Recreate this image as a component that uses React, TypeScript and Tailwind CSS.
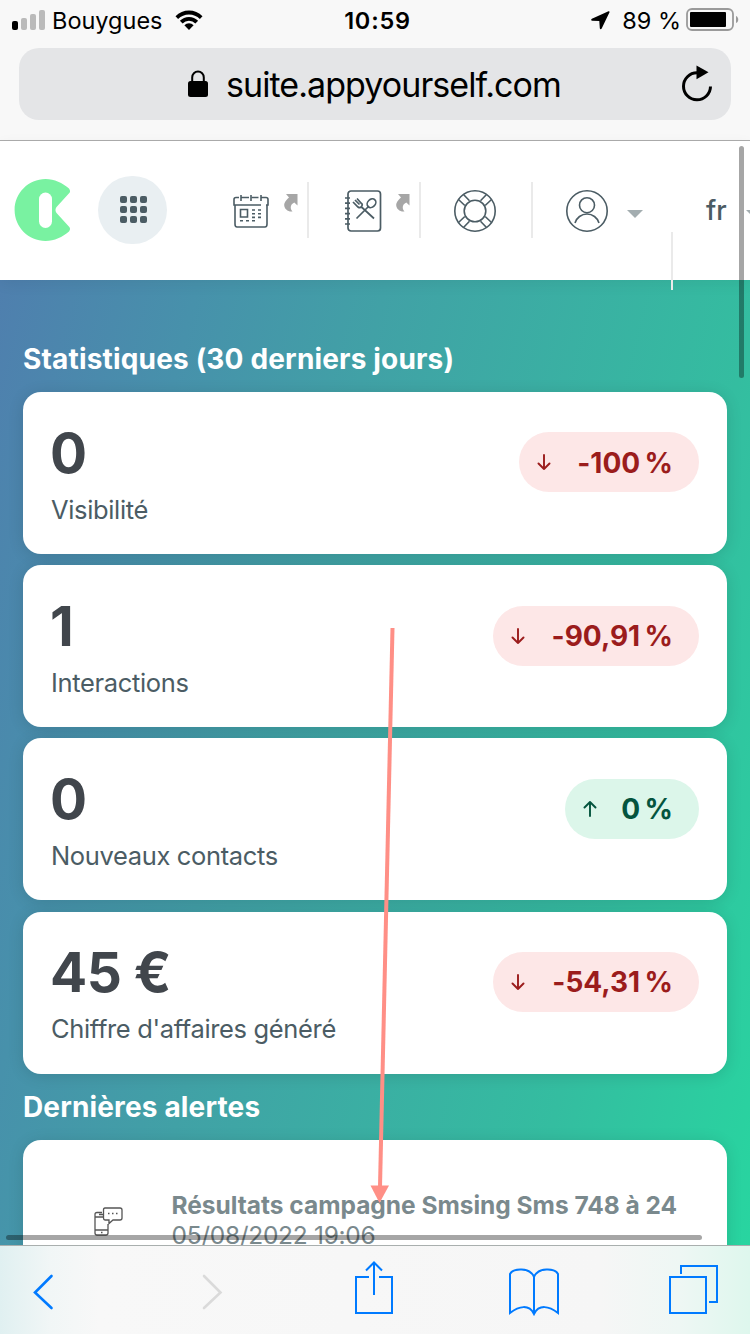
import clsx from 'clsx';

interface Stat {
  value: string;
  label: string;
  change: string;
  trend: 'up' | 'down';
  pillWidth: string;
}

const stats: Stat[] = [
  { value: '0', label: 'Visibilité', change: '-100\u202f%', trend: 'down', pillWidth: 'w-[180px]' },
  { value: '1', label: 'Interactions', change: '-90,91\u202f%', trend: 'down', pillWidth: 'w-[206px]' },
  { value: '0', label: 'Nouveaux contacts', change: '0\u202f%', trend: 'up', pillWidth: 'w-[134px]' },
  { value: '45 €', label: "Chiffre d'affaires généré", change: '-54,31\u202f%', trend: 'down', pillWidth: 'w-[206px]' },
];

function StatusBar() {
  return (
    <div className="h-10 flex items-center pl-3 pr-[10px] text-black">
      <div className="flex-1 flex items-center">
        <svg width="34" height="20" viewBox="0 0 34 20" className="shrink-0">
          <rect x="0" y="11" width="6" height="9" rx="2" />
          <rect x="9" y="8" width="6" height="12" rx="2" fill="#bababa" />
          <rect x="18" y="4" width="6" height="16" rx="2" fill="#bababa" />
          <rect x="27" y="0" width="6" height="20" rx="2" fill="#bababa" />
        </svg>
        <span className="ml-[6px] pt-[2px] text-[23.5px] leading-none">Bouygues</span>
        <svg width="28" height="21" viewBox="0 0 28 21" className="ml-3">
          <path d="M0.5 6.2a19 19 0 0 1 27 0l-2.6 2.7a15.4 15.4 0 0 0-21.8 0z" />
          <path d="M4.9 10.7a12.8 12.8 0 0 1 18.2 0l-2.7 2.7a9 9 0 0 0-12.8 0z" />
          <path d="M9.4 15.2a6.5 6.5 0 0 1 9.2 0L14 20z" />
        </svg>
      </div>
      <span className="pl-[3px] pt-[2px] text-[23.5px] font-semibold leading-none tracking-[0.8px]">10:59</span>
      <div className="flex-1 flex items-center justify-end">
        <svg width="19" height="19" viewBox="0 0 19 19">
          <path d="M17.5 0.3L0.9 7.7c-1.2.6-.8 1.9.3 2L8.3 10l.5 7.2c.1 1.2 1.3 1.5 1.900.3L18.5 1.300c.3-.8-.3-1.300-1-1z" />
        </svg>
        <span className="ml-3 pt-[2px] text-[23.5px] leading-none">89 %</span>
        <svg width="54" height="24" viewBox="0 0 54 24" className="ml-[5px]">
          <rect x="1" y="1" width="46" height="21" rx="5" fill="none" stroke="#9a9a9a" strokeWidth="1.8" />
          <rect x="4" y="4" width="36" height="15" rx="1" />
          <path d="M50 8c3 1 3 6 0 7z" fill="#9a9a9a" />
        </svg>
      </div>
    </div>
  );
}

function AddressBar() {
  return (
    <div className="mt-2 mx-[19px] h-[72px] rounded-[20px] bg-[#e4e5e7] flex items-center pl-[169px] pr-[18px]">
      <svg width="20" height="28" viewBox="0 0 20 28">
        <path d="M4.2 12V7.5a5.8 6 0 0 1 11.6 0V12" fill="none" stroke="#000" strokeWidth="2" />
        <rect x="0" y="11" width="20" height="16" rx="2.5" />
      </svg>
      <span className="ml-[18px] pt-px text-[34px] leading-none tracking-[-0.94px] text-black whitespace-nowrap">
        suite.appyourself.com
      </span>
      <svg width="32" height="38" viewBox="0 0 32 38" className="ml-auto">
        <path d="M16 7.8A13.5 13.5 0 1 0 29.5 21.5" fill="none" stroke="#000" strokeWidth="3" />
        <path d="M15.5 0.5L27.5 7.2L15.5 14.2z" />
      </svg>
    </div>
  );
}

function ShortcutArrow() {
  return (
    <svg width="14" height="18" viewBox="0 0 14 18" fill="#a6a6a6">
      <path d="M2 0H13.5V11.5L10.3 8.6C6.500 10.500 5.500 14 8.500 17.500C3.500 18.200-0.800 14 0.400 9.500C1.200 7 3.200 5 5 3.500z" />
    </svg>
  );
}

function Caret() {
  return (
    <svg width="16" height="8" viewBox="0 0 16 8" fill="#a3adb0" className="shrink-0">
      <path d="M0 0h16L8 8z" />
    </svg>
  );
}

function NavBar() {
  return (
    <nav className="relative z-10 h-[139px] pb-px bg-white shadow-[0_4px_14px_rgba(0,0,0,0.06)] flex items-center pl-[14px] overflow-x-clip">
      <svg width="56" height="62" viewBox="0 0 56 62" className="shrink-0">
        <path
          d="M31.5 0C14.5 0 0.6 14 0.6 31s13.9 31 30.9 31c9 0 17-4 23.5-9.5 1.300-1.400 1.300-3.300.3-4.400L43 34.500c-2-2-2-5 0-7L55.300 14.100c1-1.100 1-3-.3-4.600C48.500 4 40.500 0 31.500 0z"
          fill="#79f2a1"
        />
        <rect x="25" y="13.5" width="13" height="35.5" rx="6.5" fill="#fff" />
      </svg>

      <div className="ml-7 w-[69px] h-[68px] pb-[2px] pl-px shrink-0 rounded-full bg-[#e9eff2] flex items-center justify-center">
        <div className="grid grid-cols-3 gap-[3px]">
          {Array.from({ length: 9 }, (_, index) => (
            <span key={index} className="size-[7px] rounded-[2px] bg-[#4b5c64]" />
          ))}
        </div>
      </div>

      <div className="ml-[30px] w-28 h-14 shrink-0 border-r-2 border-[#eaeaea] flex pl-9">
        <svg width="36" height="34" viewBox="0 0 36 34" fill="none" stroke="#4b5c64" strokeWidth="1.6" className="mt-[13px]">
          <path d="M6 2.5H3Q1 2.5 1 4.5V10h2M8 2.5h8M18.5 2.5h7M28 2.5h5Q35 2.5 35 4.5V10h-2" />
          <path d="M8 0v6M18 0v6M28 0v6M3 10h25M2 10v19q0 3 2 3h28q2 0 2-3V10" />
          <path d="M7.5 14.5h7v7.5h-7zM19 15h3M25 15h3M19 18.7h3M25 18.7h3M19 22.4h3M25 22.4h3M7 25.7h3M13 25.7h3M19 25.7h3" />
        </svg>
        <div className="ml-[15px] mt-3">
          <ShortcutArrow />
        </div>
      </div>

      <div className="w-28 h-14 shrink-0 border-r-2 border-[#eaeaea] flex pl-9">
        <svg width="37" height="42" viewBox="0 0 37 42" fill="none" stroke="#4b5c64" strokeWidth="1.7" className="mt-2">
          <rect x="3" y="1" width="32.5" height="40" rx="3" />
          <path d="M0 8h5M0 13.2h5M0 18.4h5M0 23.6h5M0 28.8h5M0 34h5" />
          <path d="M11.5 28.5L24 16M29 28.5L16.500 17M8 12l5 5q2 1.500 3.500-.5t0-3l-4.500-5M10 10l4.500 4.500" />
          <ellipse cx="26.5" cy="13.2" rx="4.8" ry="3.8" transform="rotate(-45 26.5 13.2)" />
        </svg>
        <div className="ml-[14px] mt-3">
          <ShortcutArrow />
        </div>
      </div>

      <div className="w-28 h-14 shrink-0 border-r-2 border-[#eaeaea] flex pl-[33px]">
        <svg width="42" height="42" viewBox="0 0 42 42" fill="none" stroke="#4b5c64" strokeWidth="1.6" className="mt-2">
          <circle cx="21" cy="21" r="20.2" />
          <circle cx="21" cy="21" r="10.8" />
          <path d="M9.5 4.5l6 6.3M4.5 9.5l6.3 6M32.5 4.5l-6 6.3M37.5 9.5l-6.3 6M9.5 37.5l6-6.3M4.5 32.5l6.3-6M32.5 37.5l-6-6.3M37.5 32.5l-6.3-6" />
        </svg>
      </div>

      <div className="w-[138px] h-14 shrink-0 flex pl-[33px]">
        <svg width="42" height="42" viewBox="0 0 42 42" fill="none" stroke="#4b5c64" strokeWidth="1.6" className="mt-2">
          <circle cx="21" cy="21" r="20.2" />
          <circle cx="21" cy="15.2" r="7.5" />
          <path d="M9 33a12.5 12.5 0 0 1 24 0" />
        </svg>
        <div className="ml-[19px] mt-7">
          <Caret />
        </div>
      </div>
      <span className="mt-[102px] w-[2px] h-[58px] shrink-0 bg-[#eaeaea]" />

      <span className="ml-[33px] w-[40px] shrink-0 text-[27px] leading-none font-medium text-[#4b5c64]">fr</span>
      <div className="mt-[7px]">
        <Caret />
      </div>
    </nav>
  );
}

function StatCard({ value, label, change, trend, pillWidth }: Stat) {
  const isDown = trend === 'down';

  return (
    <div className="h-[162px] rounded-[18px] bg-white shadow-[0_2px_16px_rgba(0,0,0,0.12)] flex justify-between px-7">
      <div className="pt-[32.5px]">
        <p className="-ml-px text-[55px] leading-[56px] tracking-[-0.5px] font-bold text-[#41464c]">{value}</p>
        <p className="mt-[13px] text-[25.5px] leading-8 tracking-[-0.35px] text-[#4b5c64]">{label}</p>
      </div>
      <div
        className={clsx(
          'mt-[40.4px] h-[60px] rounded-full flex items-center justify-between pl-[17.5px] pr-[26px]',
          pillWidth,
          isDown ? 'bg-[#fde7e7] text-[#9b1c1c]' : 'bg-[#dcf6ea] text-[#04543e]'
        )}
      >
        <svg
          width="14"
          height="16"
          viewBox="0 0 14 16"
          fill="none"
          stroke="currentColor"
          strokeWidth="1.9"
          strokeLinecap="round"
          strokeLinejoin="round"
          className={clsx('shrink-0', !isDown && 'rotate-180')}
        >
          <path d="M7 1v14M1.5 9.5L7 15l5.5-5.5" />
        </svg>
        <span className="pt-px text-[28px] leading-none tracking-[0.6px] font-bold whitespace-nowrap">{change}</span>
      </div>
    </div>
  );
}

function AlertCard() {
  return (
    <div className="mt-[15.8px] h-[160px] rounded-[18px] bg-white shadow-[0_2px_16px_rgba(0,0,0,0.12)] flex pl-[71px]">
      <svg width="29" height="29" viewBox="0 0 29 29" fill="none" stroke="#555" strokeWidth="1.3" className="mt-[67px] shrink-0">
        <path d="M8 5.5H3Q1 5.5 1 7.5V26q0 2 2 2h9q2 0 2-2V17M1 10h8M5 7.5h4M1 23h13" />
        <path d="M11 1h15q2 0 2 2v8q0 2-2 2h-7l-4 3.5V13h-4q-1.5 0-1.5-2V3q0-2 1.5-2z" />
        <path d="M14 6.5h1.5M18 6.5h1.5M22 6.5h1.5M7 25.5h1.5" strokeWidth="1.7" />
      </svg>
      <div className="ml-[48.5px] pt-[50.5px] text-[#7a898d] whitespace-nowrap">
        <p className="text-[24.5px] leading-[30px] tracking-[-0.02px] font-bold">Résultats campagne Smsing Sms 748 à 24</p>
        <p className="text-[24.5px] leading-[30px] tracking-[-0.3px]">05/08/2022 19:06</p>
      </div>
    </div>
  );
}

function Toolbar() {
  return (
    <footer className="h-[89px] border-t border-[#a9afae] bg-[linear-gradient(90deg,#e0f0f1_0,#f1f6f6_50px,#f8f8f8_100px,#f6f6f6_600px,#eef7f4_680px,#def7ed_750px)] flex text-[#007aff]">
      <svg width="750" height="88" viewBox="0 0 750 88" fill="none" stroke="currentColor" strokeWidth="2">
        <path d="M51.5 30L35 46.5L51.5 62" strokeWidth="2.6" strokeLinecap="round" />
        <path d="M204 30L220.5 46.5L204 62" stroke="#dadada" strokeWidth="2.6" strokeLinecap="round" />
        <path d="M369 31H356V67H392V31H379M374 49V17M366 24.5L374 16.500L382 24.500" />
        <path d="M534 67V31C530 21 513 22 510 28V67C519 60 529 58 534 68C539 58 549 60 558 67V28C555 22 538 21 534 31" />
        <path d="M670 31h36v36h-36zM681 28V20h36v36h-8" />
      </svg>
    </footer>
  );
}

export default function App() {
  return (
    <div className="relative w-[750px] h-[1334px] overflow-hidden flex flex-col bg-white font-['Inter',sans-serif]">
      <header className="h-[141px] shrink-0 bg-[#f8f8f8] border-b border-[#adadad]">
        <StatusBar />
        <AddressBar />
      </header>
      <NavBar />
      <main className="h-[965px] shrink-0 overflow-hidden px-[23px] bg-[linear-gradient(104deg,#4f7fae_0%,#4791ab_20%,#41a1a6_39%,#34bda0_77%,#28d5a0_100%)]">
        <h2 className="pt-[62px] text-[28px] leading-[34px] tracking-[0.17px] font-bold text-white">Statistiques (30 derniers jours)</h2>
        <div className="mt-4 flex flex-col gap-[11.2px]">
          {stats.map((stat) => (
            <StatCard key={stat.label} {...stat} />
          ))}
        </div>
        <h2 className="mt-[16.6px] text-[28px] leading-[34px] tracking-[0.15px] font-bold text-white">Dernières alertes</h2>
        <AlertCard />
      </main>
      <Toolbar />

      {/* Indicateurs de défilement */}
      <div className="absolute z-20 left-[739px] top-[146px] w-[5px] h-[232px] rounded-full bg-black/35" />
      <div className="absolute z-20 left-[6px] top-[1235px] w-[696px] h-[5px] rounded-full bg-black/35" />

      {/* Flèche d'annotation */}
      <svg className="absolute z-20 left-[365px] top-[625px]" width="40" height="580" viewBox="0 0 40 580">
        <path d="M27.5 3L15 562" stroke="#ff8f86" strokeWidth="4" />
        <path d="M5.5 560.5h18.5L14.5 578z" fill="#ff8f86" />
      </svg>
    </div>
  );
}
